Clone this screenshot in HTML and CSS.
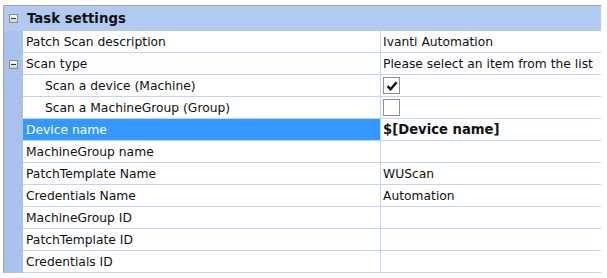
FILE: index.html
```html
<!DOCTYPE html>
<html lang="en">
<head>
  <meta charset="UTF-8">
  <title>Task settings</title>
  <link rel="stylesheet" href="styles.css">
</head>
<body>

  <!-- Property grid -->
  <div class="grid">
    <div class="row header">
      <div class="gutter"><span class="toggle"></span></div>
      <div class="cat-name">Task settings</div>
    </div>

    <div class="row">
      <div class="gutter"></div>
      <div class="label">Patch Scan description</div>
      <div class="value">Ivanti Automation</div>
    </div>
    <div class="row">
      <div class="gutter"><span class="toggle"></span></div>
      <div class="label">Scan type</div>
      <div class="value">Please select an item from the list</div>
    </div>
    <div class="row">
      <div class="gutter"></div>
      <div class="label child">Scan a device (Machine)</div>
      <div class="value"><span class="check checked">
        <svg width="14" height="14" viewBox="0 0 14 14"><path d="M2.5 7.2 L5.6 10.3 L11.6 3.2" fill="none" stroke="#111" stroke-width="2.4"/></svg>
      </span></div>
    </div>
    <div class="row">
      <div class="gutter"></div>
      <div class="label child">Scan a MachineGroup (Group)</div>
      <div class="value"><span class="check"></span></div>
    </div>
    <div class="row selected">
      <div class="gutter"></div>
      <div class="label">Device name</div>
      <div class="value bold">$[Device name]</div>
    </div>
    <div class="row">
      <div class="gutter"></div>
      <div class="label">MachineGroup name</div>
      <div class="value"></div>
    </div>
    <div class="row">
      <div class="gutter"></div>
      <div class="label">PatchTemplate Name</div>
      <div class="value">WUScan</div>
    </div>
    <div class="row">
      <div class="gutter"></div>
      <div class="label">Credentials Name</div>
      <div class="value">Automation</div>
    </div>
    <div class="row">
      <div class="gutter"></div>
      <div class="label">MachineGroup ID</div>
      <div class="value"></div>
    </div>
    <div class="row">
      <div class="gutter"></div>
      <div class="label">PatchTemplate ID</div>
      <div class="value"></div>
    </div>
    <div class="row">
      <div class="gutter"></div>
      <div class="label">Credentials ID</div>
      <div class="value"></div>
    </div>
  </div>

</body>
</html>
```

FILE: styles.css
```css
* {
  box-sizing: border-box;
}

body {
  margin: 0;
  background: white;
  font-family: "DejaVu Sans", sans-serif;
  font-size: 12.3px;
  color: #111;
}

.grid {
  margin: 5px 0 0 3px;
  width: 598px;
  border-top: 1px solid #a3a3a3;
  border-left: 1px solid #a3a3a3;
}

.row {
  display: flex;
  height: 22px;
}

.gutter {
  width: 19px;
  flex: none;
  background: #a9c2ec;
  display: flex;
  align-items: center;
  justify-content: center;
}

.label,
.value {
  display: flex;
  align-items: center;
  border-bottom: 1px solid #c3d4f1;
  white-space: nowrap;
}

.label {
  width: 358px;
  flex: none;
  padding-left: 3px;
  border-right: 1px solid #c3d4f1;
}

.label.child {
  padding-left: 22px;
}

.value {
  flex: 1;
  padding-left: 2px;
}

.value.bold {
  font-weight: bold;
  font-size: 13.2px;
}

/* Category header */
.header {
  height: 25px;
  background: #b1caf2;
}

.header .gutter {
  background: #b1caf2;
}

.cat-name {
  display: flex;
  align-items: center;
  padding-left: 4px;
  font-weight: bold;
  font-size: 13.3px;
}

.toggle {
  position: relative;
  width: 9px;
  height: 9px;
  border: 1px solid #8a8a8a;
  background: linear-gradient(#f4f4f4, #d4d4d4);
}

.toggle::after {
  content: "";
  position: absolute;
  left: 1px;
  top: 3px;
  width: 5px;
  height: 1px;
  background: #333;
}

/* Selected row */
.selected .label {
  background: #3399ff;
  color: white;
}

/* Checkboxes */
.check {
  width: 17px;
  height: 17px;
  border: 1px solid #8f8f8f;
  background: white;
  display: flex;
  align-items: center;
  justify-content: center;
}
```
